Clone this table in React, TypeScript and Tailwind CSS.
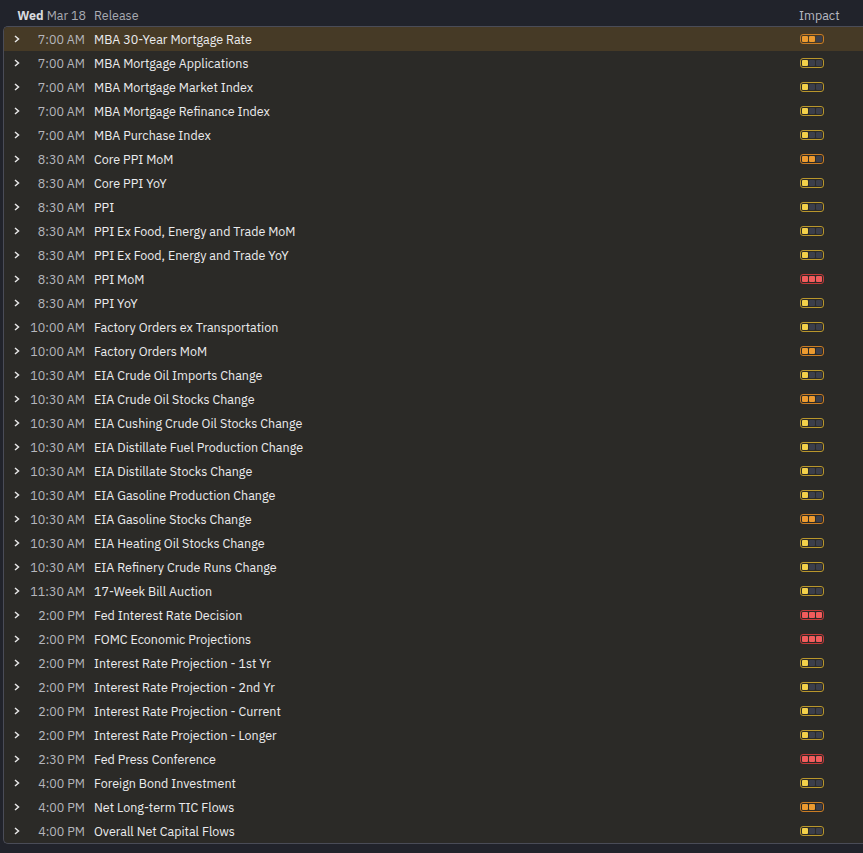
const rows: [string, string, string][] = [
  ["7:00 AM", "MBA 30-Year Mortgage Rate", "o"],
  ["7:00 AM", "MBA Mortgage Applications", "y"],
  ["7:00 AM", "MBA Mortgage Market Index", "y"],
  ["7:00 AM", "MBA Mortgage Refinance Index", "y"],
  ["7:00 AM", "MBA Purchase Index", "y"],
  ["8:30 AM", "Core PPI MoM", "o"],
  ["8:30 AM", "Core PPI YoY", "y"],
  ["8:30 AM", "PPI", "y"],
  ["8:30 AM", "PPI Ex Food, Energy and Trade MoM", "y"],
  ["8:30 AM", "PPI Ex Food, Energy and Trade YoY", "y"],
  ["8:30 AM", "PPI MoM", "r"],
  ["8:30 AM", "PPI YoY", "y"],
  ["10:00 AM", "Factory Orders ex Transportation", "y"],
  ["10:00 AM", "Factory Orders MoM", "o"],
  ["10:30 AM", "EIA Crude Oil Imports Change", "y"],
  ["10:30 AM", "EIA Crude Oil Stocks Change", "o"],
  ["10:30 AM", "EIA Cushing Crude Oil Stocks Change", "y"],
  ["10:30 AM", "EIA Distillate Fuel Production Change", "y"],
  ["10:30 AM", "EIA Distillate Stocks Change", "y"],
  ["10:30 AM", "EIA Gasoline Production Change", "y"],
  ["10:30 AM", "EIA Gasoline Stocks Change", "o"],
  ["10:30 AM", "EIA Heating Oil Stocks Change", "y"],
  ["10:30 AM", "EIA Refinery Crude Runs Change", "y"],
  ["11:30 AM", "17-Week Bill Auction", "y"],
  ["2:00 PM", "Fed Interest Rate Decision", "r"],
  ["2:00 PM", "FOMC Economic Projections", "r"],
  ["2:00 PM", "Interest Rate Projection - 1st Yr", "y"],
  ["2:00 PM", "Interest Rate Projection - 2nd Yr", "y"],
  ["2:00 PM", "Interest Rate Projection - Current", "y"],
  ["2:00 PM", "Interest Rate Projection - Longer", "y"],
  ["2:30 PM", "Fed Press Conference", "r"],
  ["4:00 PM", "Foreign Bond Investment", "y"],
  ["4:00 PM", "Net Long-term TIC Flows", "o"],
  ["4:00 PM", "Overall Net Capital Flows", "y"],
];

function Impact({ level }: { level: string }) {
  const border =
    level === "r" ? "border-[#c23838]" : level === "o" ? "border-[#c97c24]" : "border-[#b8962c]";
  const fill = level === "r" ? "bg-[#f05c5c]" : level === "o" ? "bg-[#eb9a30]" : "bg-[#f2d04a]";
  const n = level === "r" ? 3 : level === "o" ? 2 : 1;
  return (
    <div className={`inline-flex gap-px p-px rounded-[3px] border ${border}`}>
      {[0, 1, 2].map((i) => (
        <div key={i} className={`w-[6px] h-[6px] rounded-[1px] ${i < n ? fill : "bg-[#3b3e4b]"}`} />
      ))}
    </div>
  );
}

export default function App() {
  return (
    <div
      className="w-[863px] h-[853px] bg-[#21232b] text-[12.5px] overflow-hidden pl-[3px]"
      style={{ fontFamily: "'IBM Plex Sans', Inter, 'Noto Sans', sans-serif" }}
    >
      {/* header */}
      <div className="flex items-center h-[26px] pt-[5px] text-[#c9cad0]">
        <div className="w-[83px] text-right">
          <span className="font-bold text-[#d8d9de]">Wed</span>{" "}
          <span className="text-[#a9abb3]">Mar 18</span>
        </div>
        <div className="ml-[8px] flex-1 text-[#a9abb3]">Release</div>
        <div className="w-[64px] text-[#b8bac2]">Impact</div>
      </div>

      {/* table */}
      <div className="border border-r-0 border-[#4a4c57] rounded-l-[5px] bg-[#2b2a27] overflow-hidden">
        {rows.map(([time, name, lvl], i) => (
          <div
            key={i}
            className={`flex items-center h-[24px] ${i === 0 ? "bg-[#463a26]" : ""}`}
          >
            <div className="w-[24px] flex justify-center">
              <svg width="8" height="8" viewBox="0 0 8 8" className="ml-[1px] mt-[-1px]">
                <path d="M2 1 L5.5 4 L2 7" fill="none" stroke="#e6e6e6" strokeWidth="1.5" />
              </svg>
            </div>
            <div className="w-[57px] text-right text-[#b5b6bc]">{time}</div>
            <div className="ml-[9px] flex-1 text-[#ececee]">{name}</div>
            <div className="w-[63px] flex">
              <Impact level={lvl} />
            </div>
          </div>
        ))}
      </div>
    </div>
  );
}
